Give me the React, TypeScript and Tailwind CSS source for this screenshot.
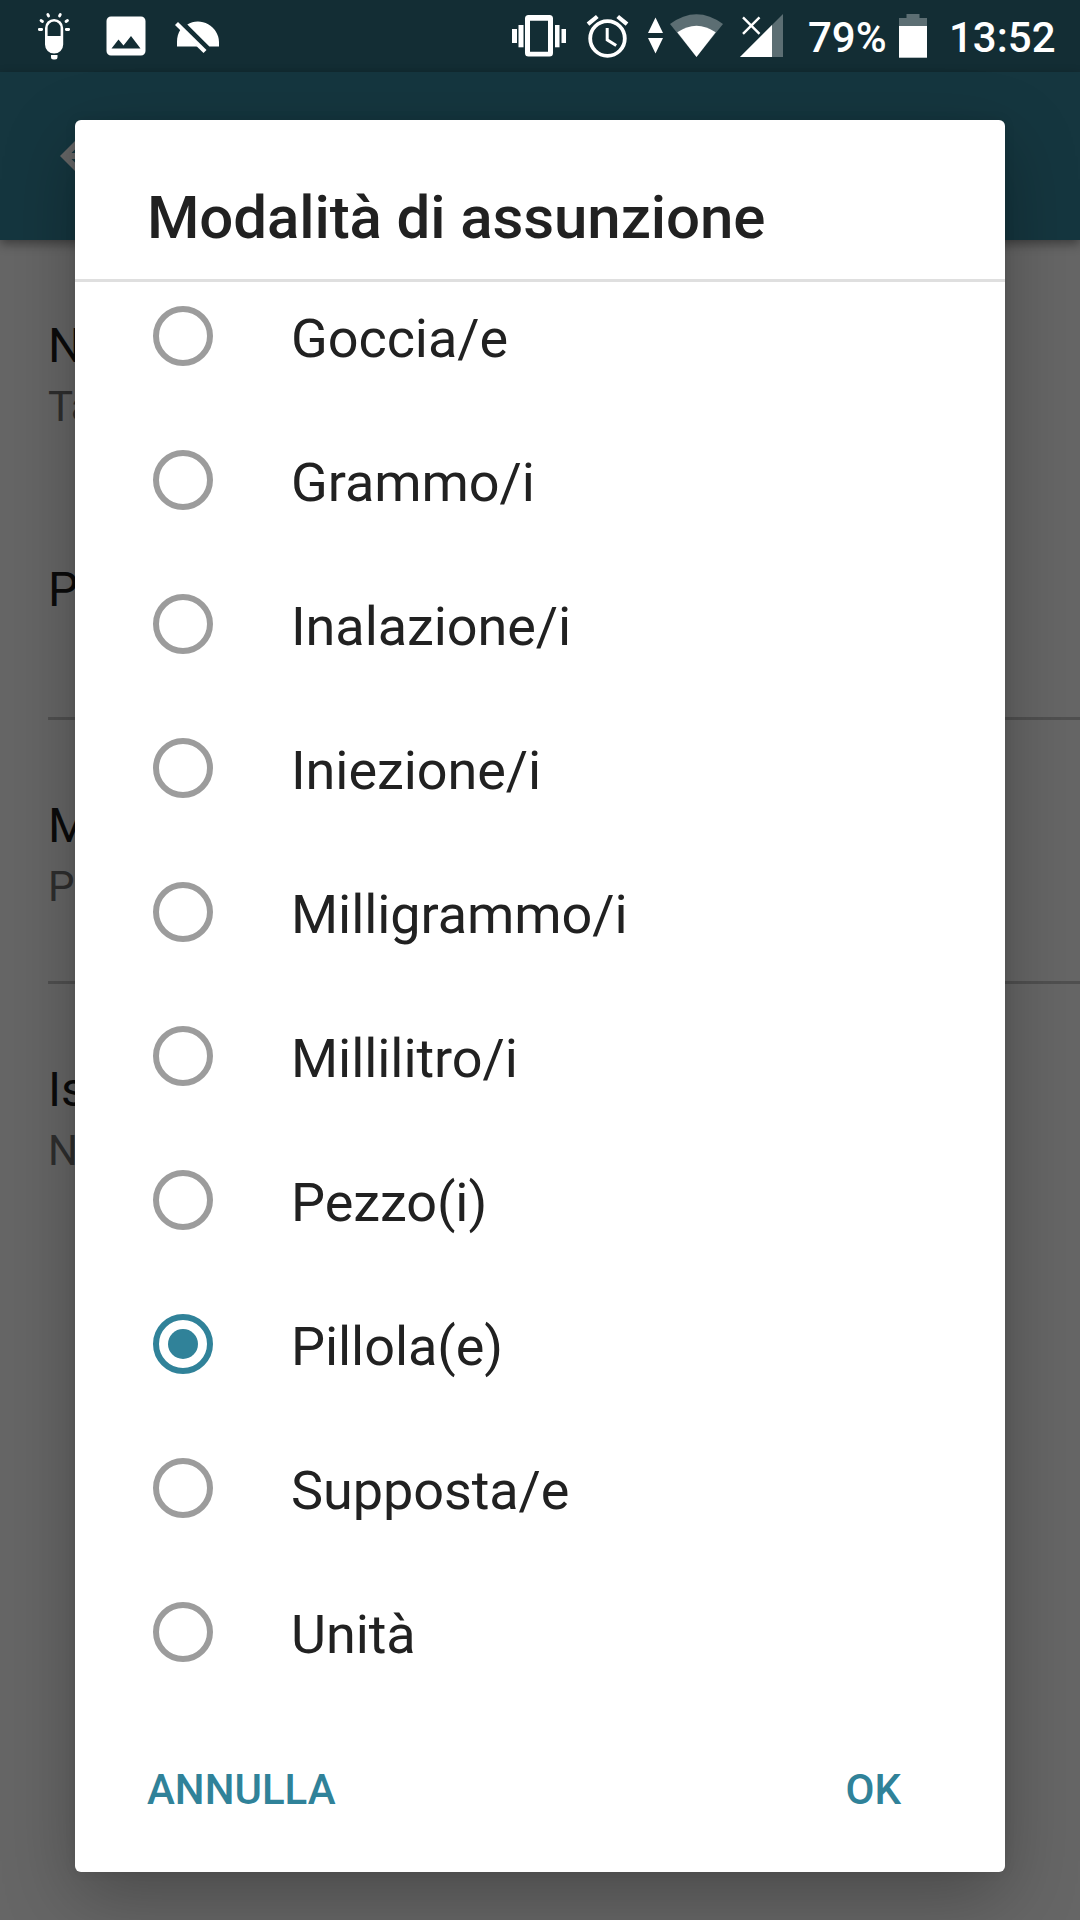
import React from "react";

const options = [
  "Goccia/e",
  "Grammo/i",
  "Inalazione/i",
  "Iniezione/i",
  "Milligrammo/i",
  "Millilitro/i",
  "Pezzo(i)",
  "Pillola(e)",
  "Supposta/e",
  "Unità",
];

function NotificationIcons() {
  return (
    <svg width="230" height="72" viewBox="0 0 230 72" fill="#fff">
      <path
        d="M39.300 29.500h2.400M66.300 29.500h2.400M41 20.500l1.500 1M67.500 20.500l-1.500 1M47.800 14.500l.800 1.500M60.300 14.500l-.800 1.500"
        stroke="#fff"
        strokeWidth="2.800"
        strokeLinecap="round"
      />
      <path d="M46.300 28a7.800 7.800 0 0 1 15.600 0v16.500a7.800 7.800 0 0 1-15.600 0z" fill="none" stroke="#fff" strokeWidth="2.600" />
      <path d="M46 36h16v8.500a8 8 0 0 1-16 0zM51 55h6.500v2a2.500 2.500 0 0 1-2.500 2.500h-1.500a2.500 2.500 0 0 1-2.500-2.500z" />
      <path fillRule="evenodd" d="M111 16.500h30a4.500 4.500 0 0 1 4.500 4.500v30a4.500 4.500 0 0 1-4.500 4.500h-30a4.500 4.500 0 0 1-4.500-4.500v-30a4.500 4.500 0 0 1 4.500-4.500zM111.500 48.500h29L131 36l-7.500 9.500-5-6z" />
      <path d="M187.300 24.500A21 21 0 0 1 219 42v4.500h-9.600zM180.500 29.500L197.500 46.500H177V42c0-4.700 1.200-8.900 3.500-12.500z" />
      <path d="M176.500 23.500L205 51.500" stroke="#fff" strokeWidth="4.300" />
    </svg>
  );
}

function SystemIcons() {
  return (
    <svg width="280" height="72" viewBox="505 0 280 72" fill="#fff">
      <rect x="512" y="29" width="5" height="14" />
      <rect x="518.500" y="25" width="5" height="22.300" />
      <rect x="555" y="25" width="4.500" height="22.300" />
      <rect x="561.500" y="29" width="4.500" height="14" />
      <path fillRule="evenodd" d="M528.500 15h21a3.500 3.500 0 0 1 3.500 3.500v34.500a3.500 3.500 0 0 1-3.500 3.500h-21a3.500 3.500 0 0 1-3.500-3.500V18.500a3.500 3.500 0 0 1 3.500-3.500zM530 20.700v31h18v-31z" />
      <circle cx="607.500" cy="38.500" r="17.300" fill="none" stroke="#fff" strokeWidth="3.800" />
      <path d="M607.200 28v11.800l9 5.700" fill="none" stroke="#fff" strokeWidth="3" />
      <path d="M597.300 16.500l-9.300 7.700M617.700 16.500l9.300 7.700" stroke="#fff" strokeWidth="4.200" />
      <path d="M655.500 17.500L663 33h-15zM648 38h15l-7.500 15.500z" />
      <path d="M696.500 57L670 24Q696.500 4.500 723 24z" fill="#5c6e73" />
      <path d="M696.500 57L677.300 32.300Q696.500 19.300 715.700 32.300z" />
      <path d="M740 57L783 14v43z" fill="#5c6e73" />
      <path d="M740 57L772 25v32z" />
      <path d="M743 17.300l16.500 16.500M759.500 17.300L743 33.800" stroke="#fff" strokeWidth="2.400" />
    </svg>
  );
}

function Battery() {
  return (
    <svg className="ml-[13px]" width="28" height="72" viewBox="0 0 28 72">
      <path d="M7.500 14h13v4H28v9H0v-9h7.500z" fill="#5c6e73" />
      <path d="M0 26h28v31.700H0z" fill="#fff" />
    </svg>
  );
}

function StatusBar() {
  return (
    <div className="flex h-[72px] bg-[#132d34] text-[42px] leading-[75px] font-medium text-white">
      <NotificationIcons />
      <div className="ml-[275px]"><SystemIcons /></div>
      <span className="ml-[23px] w-[78px] whitespace-nowrap">79%</span>
      <Battery />
      <span className="ml-[22px]">13:52</span>
    </div>
  );
}

function Setting({ title, detail }: { title: string; detail?: string }) {
  return (
    <div className="pl-12">
      <div className="h-14 text-[48px] leading-[56px] text-[#0b0b0b]">{title}</div>
      {detail && <div className="mt-[5px] h-[55px] text-[42px] leading-[56px] text-[#2e2e2e]">{detail}</div>}
    </div>
  );
}

function Radio({ checked }: { checked: boolean }) {
  return checked ? (
    <span className="flex size-[60px] items-center justify-center rounded-full border-[6px] border-[#308299]">
      <span className="size-[30px] rounded-full bg-[#308299]" />
    </span>
  ) : (
    <span className="size-[60px] rounded-full border-[6px] border-[#9c9c9c]" />
  );
}

function Dialog() {
  return (
    <div
      role="dialog"
      className="absolute top-[120px] left-[75px] flex h-[1752px] w-[930px] flex-col rounded-[6px] bg-white shadow-[0_24px_72px_rgba(0,0,0,0.28),0_0_12px_rgba(0,0,0,0.08)]"
    >
      <h1 className="h-[162px] shrink-0 border-b-[3px] border-[#dfdfdf] pt-[63px] pl-[72px] text-[60px] leading-[70px] font-medium tracking-[-0.1px] text-[#212121]">
        Modalità di assunzione
      </h1>
      <div className="-mt-[18px]">
        {options.map((name) => (
          <div key={name} className="flex h-36 items-center pl-[78px]">
            <Radio checked={name === "Pillola(e)"} />
            <span className="ml-[78px] pt-[5px] text-[54px] leading-[64px] tracking-[-0.07px] text-[#212121]">{name}</span>
          </div>
        ))}
      </div>
      <div className="mt-[1px] flex justify-between pr-[104px] pl-[72px] text-[42px] leading-[50px] font-medium text-[#308299]">
        <button className="mt-[60px] h-[50px]">ANNULLA</button>
        <button className="mt-[60px] h-[50px]">OK</button>
      </div>
    </div>
  );
}

export default function App() {
  return (
    <div className="relative h-[1920px] w-[1080px] overflow-hidden bg-[#666666] font-['Roboto',sans-serif]">
      <StatusBar />
      <div className="flex h-[168px] items-center bg-[#15363f] pl-[60px] shadow-[0_4px_10px_rgba(0,0,0,0.4)]">
        <svg width="48" height="48" viewBox="4 4 16 16" className="-mt-[1px]" fill="#666">
          <path d="M20 11H7.830l5.590-5.590L12 4l-8 8 8 8 1.410-1.410L7.830 13H20v-2z" />
        </svg>
      </div>
      <div className="pt-[78px]">
        <Setting title="N" detail="Ta" />
        <div className="mt-[128px]"><Setting title="P" /></div>
        <div className="mt-[99px] ml-12 h-[3px] bg-[#505050]" />
        <div className="mt-[78px]"><Setting title="M" detail="P" /></div>
        <div className="mt-[67px] ml-12 h-[3px] bg-[#505050]" />
        <div className="mt-[78px]"><Setting title="Is" detail="N" /></div>
      </div>
      <Dialog />
    </div>
  );
}
